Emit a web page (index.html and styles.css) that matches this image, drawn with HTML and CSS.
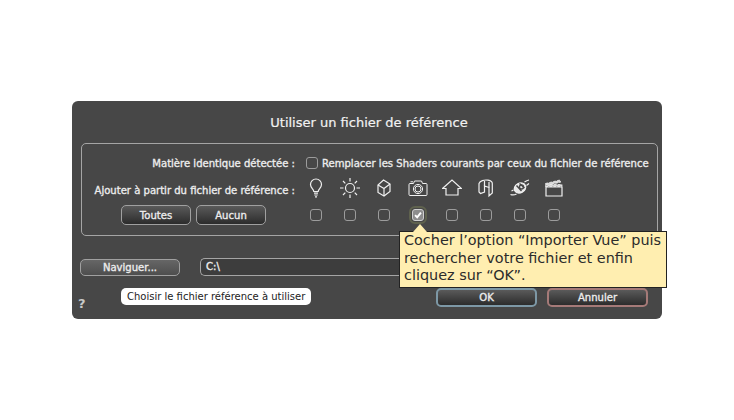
FILE: index.html
```html
<!DOCTYPE html>
<html lang="fr">
<head>
<meta charset="utf-8">
<title>Utiliser un fichier de référence</title>
<link rel="stylesheet" href="styles.css">
</head>
<body>
<div class="dialog">
  <h1 class="title">Utiliser un fichier de référence</h1>
  <section class="group">
    <div class="row row-match">
      <span class="label">Matière identique détectée :</span>
      <span class="check"></span>
      <span class="replace">Remplacer les Shaders courants par ceux du fichier de référence</span>
    </div>
    <div class="row row-icons">
      <span class="label">Ajouter à partir du fichier de référence :</span>
      <div class="cols">
        <svg class="icon" viewBox="0 0 20 20"><path d="M7.800 13.500c0-2.500-3.300-3.700-3.300-7a5.500 5.500 0 0 1 11 0c0 3.300-3.300 4.500-3.300 7zM8 15.200h4M8.300 17h3.400M9 18.800h2"/></svg>
        <svg class="icon" viewBox="0 0 20 20"><circle cx="10" cy="10" r="4.500"/><path d="M10 0v3.500M10 16.500V20M0 10h3.500M16.500 10H20M3 3l2.300 2.300M14.700 14.700L17 17M3 17l2.300-2.300M14.700 5.300L17 3"/></svg>
        <svg class="icon" viewBox="0 0 20 20"><path d="M9.500 2l6.500 4v7.500l-6 4.500-6-3.500V7z"/><path d="M4 7l6 3.500 6-4.500M10 10.500V18"/></svg>
        <svg class="icon icon-cam" viewBox="0 0 20 20"><path d="M1 6.500q0-1 1-1h3.500L6.500 3h7l1 2.500H18q1 0 1 1v10q0 1-1 1H2q-1 0-1-1z"/><circle cx="10" cy="11" r="4.600"/><circle cx="10" cy="11" r="3"/><path d="M2.500 3.800h2.500"/></svg>
        <svg class="icon" viewBox="0 0 20 20"><path d="M.5 10.500L10 2l9.500 8.500H16v6.500H4v-6.500z"/></svg>
        <svg class="icon" viewBox="0 0 20 20"><path d="M3 5.500C4 3 8 1.500 12 2.200c2.500.5 4.300 1.800 4.300 3.300V15l-3.300 3V9.500L8.500 8 8.500 14 4.500 15.500 3 14z"/><path d="M8.500 3v5M13 4v5.500"/></svg>
        <svg class="icon icon-solid" viewBox="0 0 20 20"><ellipse cx="10" cy="10" rx="6" ry="4.800" transform="rotate(-28 10 10)"/><path class="cut" d="M6.500 7.500l5 5.500M9.500 5.500l5 4.500"/><circle class="cut" cx="11.500" cy="9" r="2"/><path d="M.5 16.500c2 .8 4.500.3 6-.5M14.500 4c1.500-1 3-1.700 4.500-2M16.500 7.500l2.500-2M1.500 13l2-1"/></svg>
        <svg class="icon icon-clap" viewBox="0 0 20 20"><path d="M2 9h16v9H2z"/><path class="fill" d="M1.500 8.500h16.500V6.500H1.500zM1.500 5.500L16 2l.6 2.200L2 7.500z"/></svg>
      </div>
    </div>
    <div class="row row-checks">
      <div class="pair">
        <button class="btn btn-group">Toutes</button>
        <button class="btn btn-group">Aucun</button>
      </div>
      <div class="cols">
        <span class="check"></span>
        <span class="check"></span>
        <span class="check"></span>
        <span class="check check-on"><svg viewBox="0 0 12 12"><path d="M2.500 6.200l2.500 2.600 4.500-5.600"/></svg></span>
        <span class="check"></span>
        <span class="check"></span>
        <span class="check"></span>
        <span class="check"></span>
      </div>
    </div>
    <div class="callout">Cocher l’option “Importer Vue” puis rechercher votre fichier et enfin cliquez sur “OK”.</div>
  </section>
  <div class="path-row">
    <button class="btn btn-nav">Naviguer...</button>
    <div class="path">C:\</div>
  </div>
  <div class="foot">
    <span class="help">?</span>
    <span class="hint">Choisir le fichier référence à utiliser</span>
    <span class="spacer"></span>
    <button class="btn btn-ok">OK</button>
    <button class="btn btn-cancel">Annuler</button>
  </div>
</div>
</body>
</html>
```
FILE: styles.css
```css
* { box-sizing: border-box; }
html, body { margin: 0; height: 100%; background: #fff; }
body { padding: 101px 72px 0; font-family: "DejaVu Sans", Verdana, sans-serif; }
.dialog { width: 590px; height: 218px; background: #474747; border-radius: 6px; padding: 0 4px 0 9px; color: #eee; display: flex; flex-direction: column; }
.title { margin: 0; height: 42px; line-height: 43px; font-size: 13px; font-weight: 400; text-align: center; color: #f2f2f2; -webkit-text-stroke: .2px #f2f2f2; padding-right: 1px; }
.group { position: relative; height: 93px; border: 1px solid #a5a5a5; border-radius: 5px; display: flex; flex-direction: column; }
.row { display: flex; align-items: center; }
.label, .replace, .btn, .path { font-size: 10.050px; font-weight: 400; color: #ececec; -webkit-text-stroke: .35px #ececec; white-space: nowrap; }
.label { flex: none; width: 213px; text-align: right; }
.row-match { height: 22px; margin-top: 8px; }
.row-match .check { margin-left: 11px; }
.replace { margin-left: 4px; }
.row-icons { height: 26px; margin-top: 1px; }
.row-icons .label { padding-top: 4px; }
.cols { display: grid; grid-template-columns: repeat(8, 34px); justify-items: center; align-items: center; margin-left: 4px; }
.row-checks { height: 22px; margin-top: 3px; }
.row-checks .cols { margin-left: 33px; }
.pair { display: flex; gap: 5px; margin-left: 39px; }
.icon { width: 20px; height: 20px; fill: none; stroke: #f0f0f0; stroke-width: 1.200; }
.icon-cam { stroke-width: 1; }
.icon-solid ellipse { fill: #e8e8e8; }
.icon-solid .cut { stroke: #474747; stroke-width: 1.400; }
.icon-clap .fill { fill: #d8d8d8; stroke: #f0f0f0; stroke-dasharray: 2.500 1.500; stroke-width: .8; }
.check { width: 12px; height: 12px; display: block; border: 1px solid #9c9c9c; border-radius: 3px; flex: none; }
.check-on { background: #8d8d8d; border-color: #cfcfcf; outline: 2px solid #5f624e; outline-offset: 1px; display: flex; }
.check-on svg { width: 10px; height: 10px; fill: none; stroke: #fff; stroke-width: 2.400; }
.btn { font-family: inherit; border: 1px solid #a0a0a0; border-radius: 5px; padding: 0; background: linear-gradient(#5a5a5a, #2c2c2c); }
.btn-group { width: 70px; height: 20px; }
.btn-nav { width: 100px; height: 17px; background: linear-gradient(#666, #4e4e4e); }
.path-row { display: flex; align-items: center; gap: 20px; margin-top: 22px; margin-left: -1px; height: 18px; }
.path { width: 300px; height: 18px; line-height: 16px; padding-left: 5px; border: 1px solid #a5a5a5; border-right: 0; border-radius: 5px 0 0 5px; background: #3d3d3d; }
.foot { display: flex; align-items: flex-start; margin-top: 12px; }
.help { width: 43px; margin-left: -3px; margin-top: 8px; font-size: 13px; line-height: 15px; font-weight: 700; color: #c8c8c8; }
.hint { height: 17px; line-height: 17px; padding: 0 6px; background: #fff; border-radius: 5px; color: #222; font-size: 10px; white-space: nowrap; }
.spacer { flex: 1; }
.btn-ok, .btn-cancel { width: 101px; height: 19px; }
.btn-ok { border: 2px solid #7d98a6; }
.btn-cancel { border: 2px solid #a57a78; margin-left: 10px; margin-right: 10px; }
.callout { position: absolute; left: 317px; top: 87px; width: 268px; height: 57px; padding: 0 4px; background: #ffeeb0; border: 1px solid #222; color: #2b2b2b; font-size: 14.400px; line-height: 17.500px; z-index: 2; }
.callout::before { content: ""; position: absolute; left: 13px; top: -8px; border: solid transparent; border-width: 0 7px 8px; border-bottom-color: #ffeeb0; }
```
